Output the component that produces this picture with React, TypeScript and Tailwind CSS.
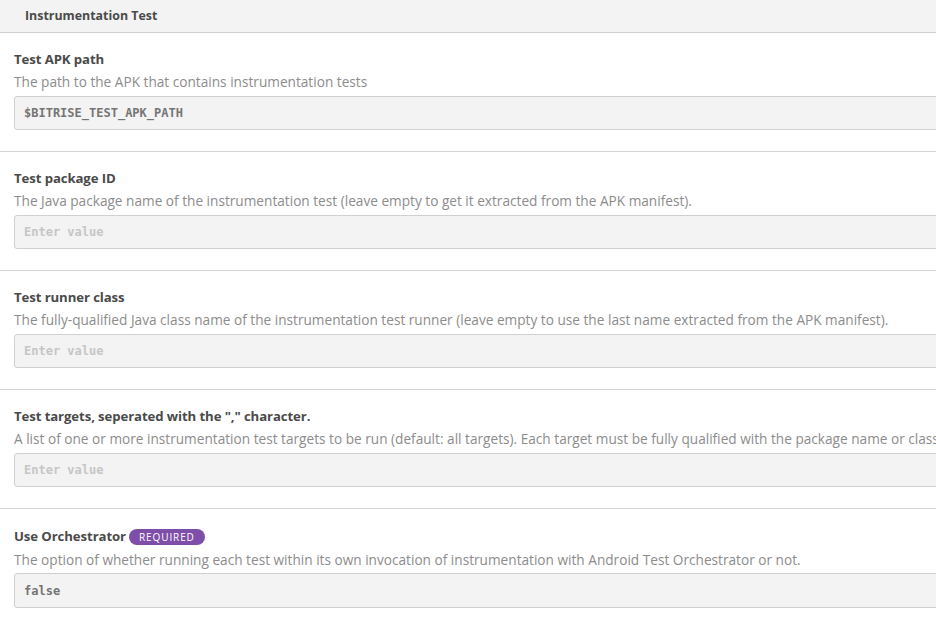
const inputs = [
  {
    title: 'Test APK path',
    desc: 'The path to the APK that contains instrumentation tests',
    value: '$BITRISE_TEST_APK_PATH',
  },
  {
    title: 'Test package ID',
    desc: 'The Java package name of the instrumentation test (leave empty to get it extracted from the APK manifest).',
  },
  {
    title: 'Test runner class',
    desc: 'The fully-qualified Java class name of the instrumentation test runner (leave empty to use the last name extracted from the APK manifest).',
  },
  {
    title: 'Test targets, seperated with the "," character.',
    desc: 'A list of one or more instrumentation test targets to be run (default: all targets). Each target must be fully qualified with the package name or class name.',
  },
  {
    title: 'Use Orchestrator',
    required: true,
    desc: 'The option of whether running each test within its own invocation of instrumentation with Android Test Orchestrator or not.',
    value: 'false',
  },
]

export default function App() {
  return (
    <div className="w-[936px] h-[623px] overflow-hidden bg-white font-['Open_Sans',sans-serif]">
      <div className="w-[1100px]">
        <div className="h-[33px] bg-[#f3f3f3] border-b border-[#cfcfcf] pl-[25px] flex items-center">
          <span className="text-[12.4px] font-bold text-[#4a4a4a]">Instrumentation Test</span>
        </div>

        {inputs.map((inp, idx) => (
          <div key={idx} className="px-[14px] pt-[19px] pb-[21px] border-b border-[#d4d4d4]">
            <div className={inp.required ? 'flex items-center gap-[3px] h-[18px]' : 'flex items-center gap-[3px] h-[16px]'}>
              <span className="text-[13.2px] font-bold text-[#4a4a4a] tracking-[-0.1px]">{inp.title}</span>
              {inp.required && (
                <span className="bg-[#7f4ea8] text-white text-[10px] tracking-[0.9px] rounded-full px-[10px] h-[16px] leading-[16px]">
                  REQUIRED
                </span>
              )}
            </div>
            <div className="mt-[6px] text-[13.65px] leading-[16px] text-[#8c8c8c] whitespace-nowrap">{inp.desc}</div>
            <div
              className={
                inp.required
                  ? 'mt-[5px] h-[35px] bg-[#f3f3f3] border border-[#d0d0d0] rounded-[3px] flex items-center pl-[9px]'
                  : 'mt-[6px] h-[34px] bg-[#f3f3f3] border border-[#d0d0d0] rounded-[3px] flex items-center pl-[9px]'
              }
            >
              <span
                className={
                  inp.value
                    ? "font-['DejaVu_Sans_Mono',monospace] text-[12px] font-bold text-[#757575]"
                    : "font-['DejaVu_Sans_Mono',monospace] text-[12px] font-bold text-[#c6c6c6]"
                }
              >
                {inp.value ?? 'Enter value'}
              </span>
            </div>
          </div>
        ))}
      </div>
    </div>
  )
}
